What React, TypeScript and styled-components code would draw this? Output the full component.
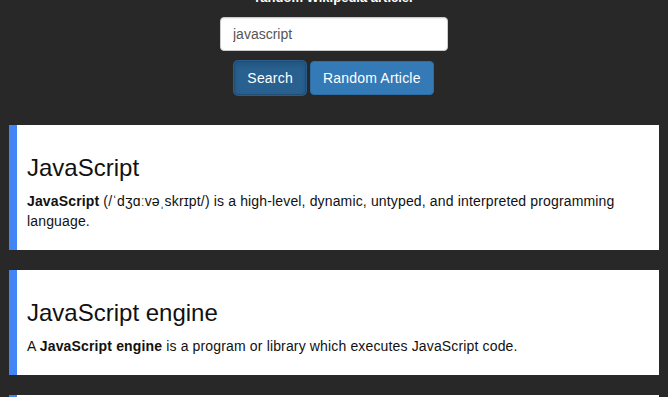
import React from "react";
import styled, { createGlobalStyle } from "styled-components";

const GlobalStyle = createGlobalStyle`
  html, body {
    margin: 0;
    padding: 0;
    background: #282828;
    font-family: "Liberation Sans", Arial, sans-serif;
    font-size: 14px;
    line-height: 1.42857;
    color: #111;
  }
  * { box-sizing: border-box; }
`;

const Page = styled.div`
  padding: 0 9px;
  overflow: hidden;
  height: 397px;
`;

const Intro = styled.header`
  display: flex;
  flex-direction: column;
  align-items: center;
  margin-top: -32px;
`;

const IntroText = styled.p`
  margin: 0;
  color: #fff;
  font-weight: bold;
  font-size: 13px;
  line-height: 20px;
  text-align: center;
`;

const SearchForm = styled.form`
  display: flex;
  flex-direction: column;
  align-items: center;
  gap: 10px;
  margin-top: 9px;
`;

const SearchInput = styled.input`
  width: 228px;
  height: 34px;
  padding: 6px 12px;
  font-family: inherit;
  font-size: 14px;
  color: #555;
  background: #fff;
  border: 1px solid #ccc;
  border-radius: 4px;
  box-shadow: inset 0 1px 1px rgba(0, 0, 0, 0.075);
  outline: none;
`;

const ButtonRow = styled.div`
  display: flex;
  gap: 4px;
`;

const Button = styled.button<{ $active?: boolean }>`
  height: 34px;
  padding: 6px 12px;
  font-family: inherit;
  font-size: 14px;
  line-height: 20px;
  letter-spacing: 0.2px;
  color: #fff;
  border-radius: 4px;
  border: 1px solid ${(p) => (p.$active ? "#204d74" : "#2e6da4")};
  background: ${(p) => (p.$active ? "#286090" : "#337ab7")};
  box-shadow: ${(p) =>
    p.$active
      ? "0 0 0 1px #2b5b88, inset 0 3px 5px rgba(0,0,0,0.125)"
      : "none"};
  cursor: pointer;
`;

const Results = styled.div`
  display: flex;
  flex-direction: column;
  gap: 20px;
  margin-top: 30px;
`;

const Card = styled.article`
  background: #fff;
  border-left: 8px solid #4285f4;
  padding: 10px 20px 8.5px 10px;
`;

const Title = styled.h2`
  margin: 20px 0 10px;
  font-size: 24px;
  font-weight: 500;
  line-height: 1.1;
  color: #111;
`;

const Extract = styled.p`
  margin: 0 0 10px;
  font-size: 14px;
  line-height: 20px;
  letter-spacing: 0.15px;
  color: #111;
`;

const results = [
  {
    title: "JavaScript",
    body: (
      <>
        <b>JavaScript</b> (/ˈdʒɑːvəˌskrɪpt/) is a high-level, dynamic, untyped,
        and interpreted programming language.
      </>
    ),
  },
  {
    title: "JavaScript engine",
    body: (
      <>
        A <b>JavaScript engine</b> is a program or library which executes
        JavaScript code.
      </>
    ),
  },
  {
    title: "JavaScript syntax",
    body: (
      <>
        The <b>syntax of JavaScript</b> is the set of rules that define a
        correctly structured JavaScript program.
      </>
    ),
  },
];

export default function App() {
  return (
    <>
      <GlobalStyle />
      <Page>
        <Intro>
          <IntroText>
            Click Search to find an entry, or click Random Article for a
            <br />
            random Wikipedia article.
          </IntroText>
          <SearchForm onSubmit={(e) => e.preventDefault()}>
            <SearchInput type="text" defaultValue="javascript" />
            <ButtonRow>
              <Button type="submit" $active>
                Search
              </Button>
              <Button type="button">Random Article</Button>
            </ButtonRow>
          </SearchForm>
        </Intro>
        <Results>
          {results.map((r) => (
            <Card key={r.title}>
              <Title>{r.title}</Title>
              <Extract>{r.body}</Extract>
            </Card>
          ))}
        </Results>
      </Page>
    </>
  );
}
